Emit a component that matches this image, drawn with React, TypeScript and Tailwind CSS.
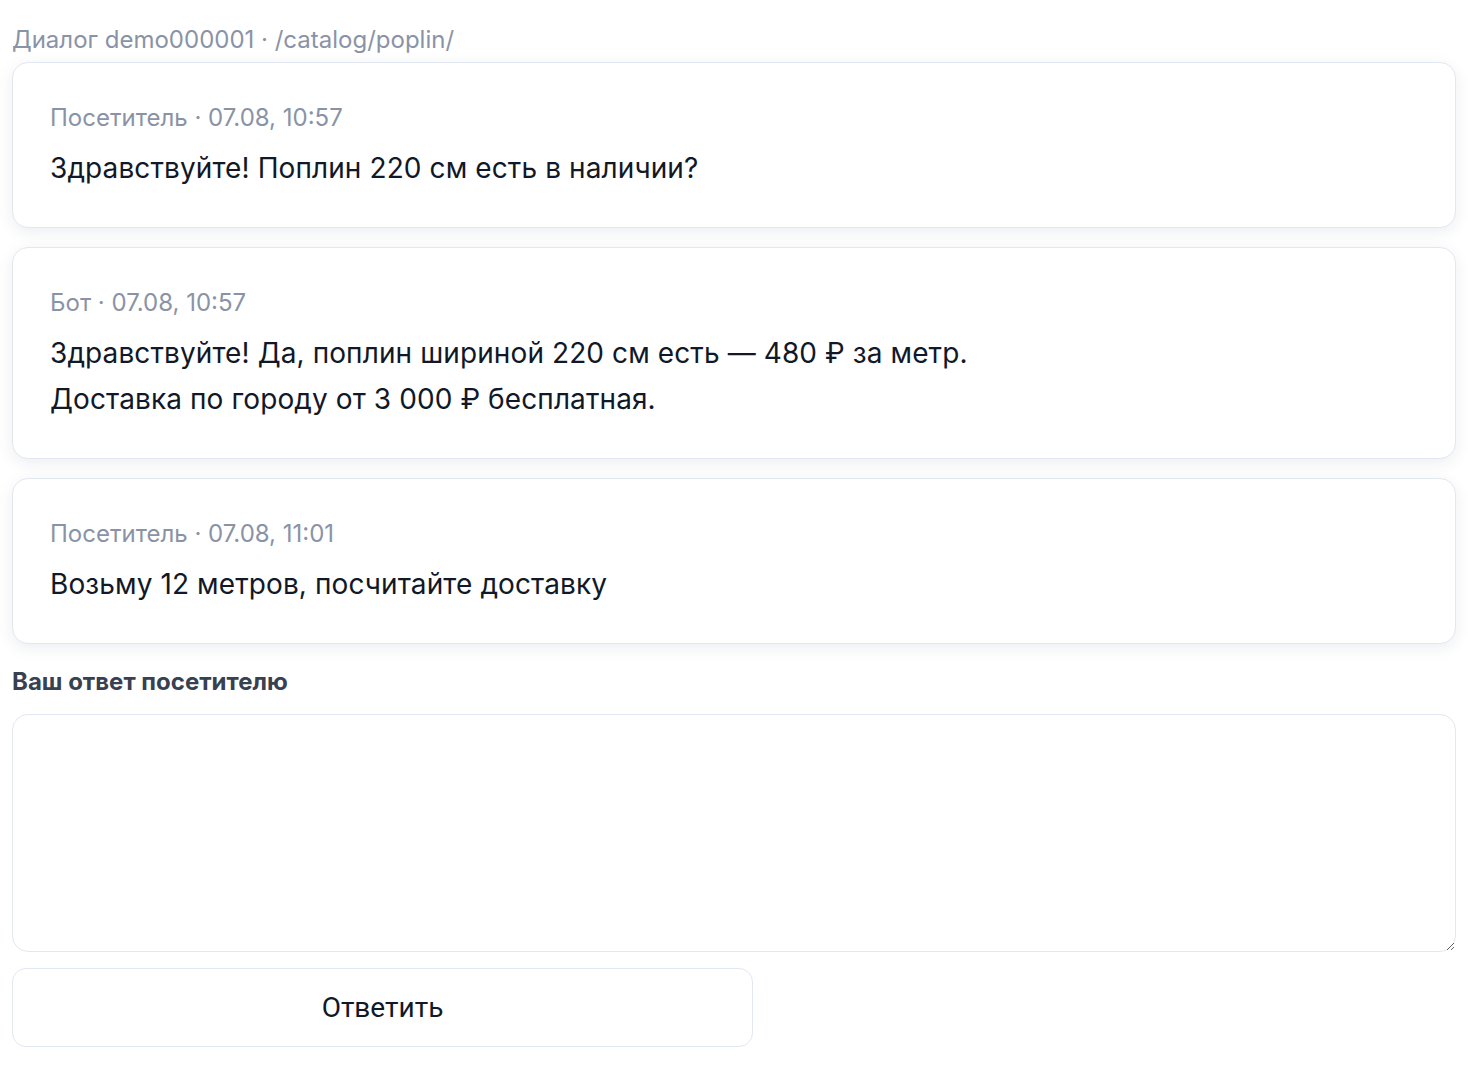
const messages = [
  { author: 'Посетитель', time: '07.08, 10:57', lines: ['Здравствуйте! Поплин 220 см есть в наличии?'] },
  {
    author: 'Бот',
    time: '07.08, 10:57',
    lines: ['Здравствуйте! Да, поплин шириной 220 см есть — 480 ₽ за метр.', 'Доставка по городу от 3 000 ₽ бесплатная.'],
  },
  { author: 'Посетитель', time: '07.08, 11:01', lines: ['Возьму 12 метров, посчитайте доставку'] },
]

const App = () => {
  return (
    <div className="min-h-screen bg-white px-3 pt-6 font-['Inter','Noto_Sans',sans-serif]">
      <div className="text-[24px] leading-[32px] text-[#8a93a6]">Диалог demo000001 · /catalog/poplin/</div>
      <div className="mt-[6px] flex flex-col gap-[19px]">
        {messages.map((m, i) => (
          <div
            key={i}
            className="rounded-2xl border border-[#e3e7f1] bg-white px-[37px] pt-[39px] pb-[36px] shadow-[0_4px_16px_rgba(30,40,80,0.08)]"
          >
            <div className="text-[24px] leading-[32px] text-[#8a93a6]">
              {m.author} · {m.time}
            </div>
            <div className="mt-[11px] text-[28px] leading-[46px] tracking-[0.1px] text-[#111827]">
              {m.lines.map((l, j) => (
                <div key={j}>{l}</div>
              ))}
            </div>
          </div>
        ))}
      </div>
      <div className="mt-[22px] text-[24px] font-bold leading-[32px] text-[#374151]">Ваш ответ посетителю</div>
      <textarea className="mt-[16px] block h-[238px] w-full rounded-2xl border border-[#e3e7f1] bg-white p-4 text-[22px] outline-none" />
      <button className="mt-[16px] h-[79px] w-[741px] rounded-[14px] border border-[#e3e7f1] bg-white font-['Roboto',sans-serif] text-[28px] text-[#111827]">
        Ответить
      </button>
    </div>
  )
}

export default App
